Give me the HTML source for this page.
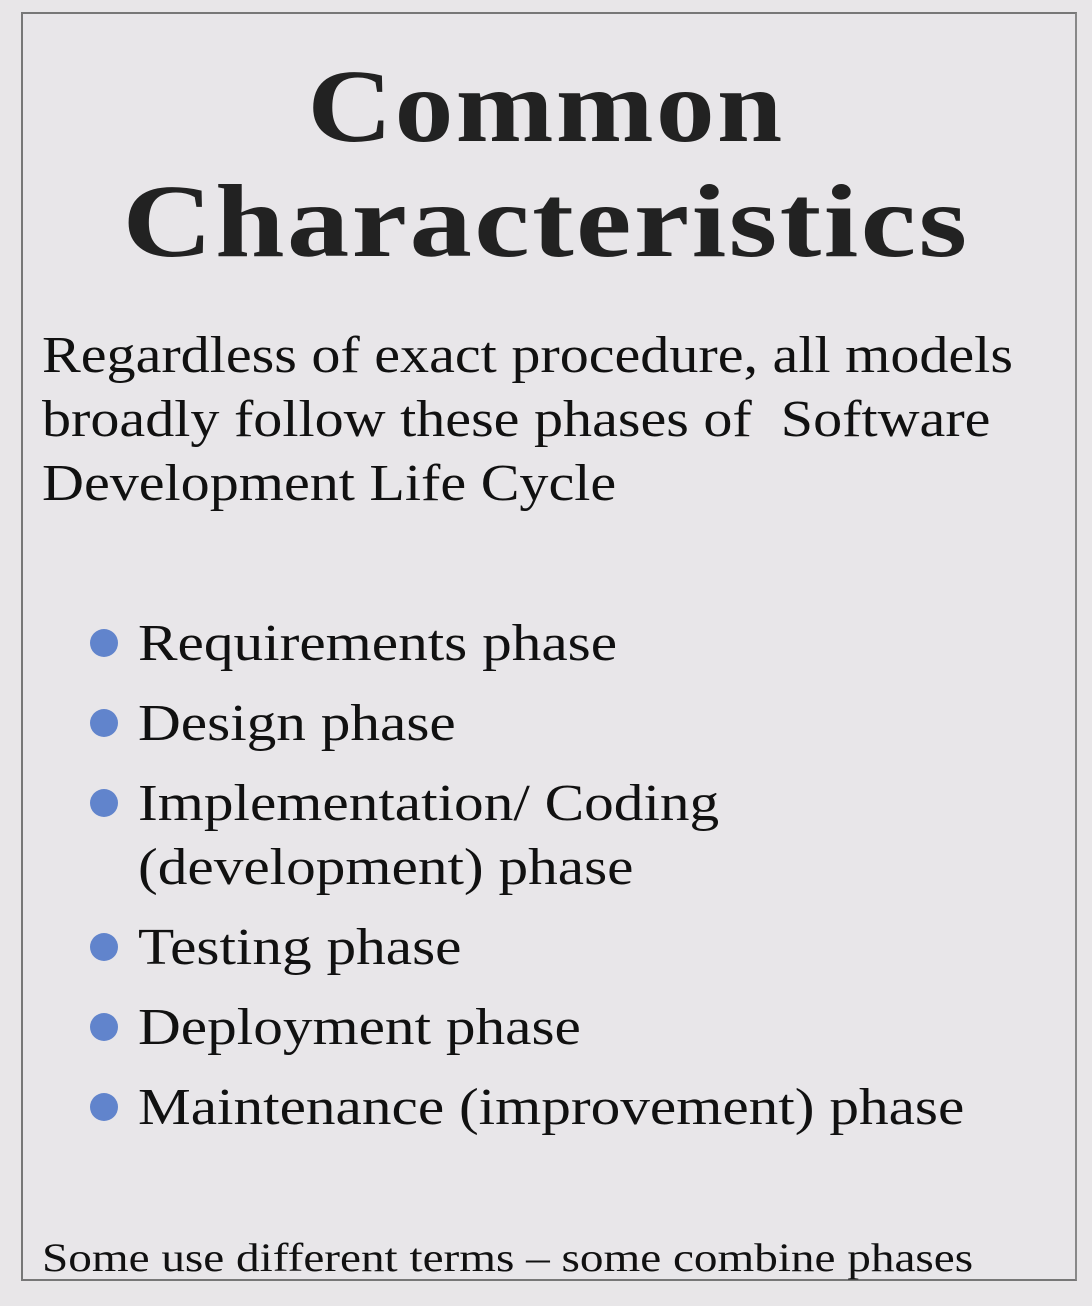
<!DOCTYPE html>
<html><head><meta charset="utf-8"><style>
html,body{margin:0;padding:0;background:#e8e6e8;width:1092px;height:1306px;overflow:hidden}
.box{position:absolute;left:21px;top:12px;width:1052px;height:1265px;border:2px solid #777;border-right-color:#888;background:#e8e6e9}
.t{position:absolute;font-family:"Liberation Serif",serif;color:#111;white-space:nowrap;line-height:1;transform-origin:0 0}
.h{font-weight:bold;font-size:104px;color:#222;left:0;width:1092px;text-align:center;letter-spacing:2px;transform-origin:50% 0}
.b{font-size:52px;transform:scaleX(1.117)}
.l{font-size:52px;transform:scaleX(1.14)}
.dot{position:absolute;left:90px;width:28px;height:28px;border-radius:50%;background:#6184cc}
</style></head><body>
<div class="box"></div>
<div class="t h" style="top:55px;transform:scaleX(1.13)">Common</div>
<div class="t h" style="top:170px;transform:scaleX(1.2)">Characteristics</div>
<div class="t b" style="left:42px;top:330px">Regardless of exact procedure, all models</div>
<div class="t b" style="left:42px;top:394px">broadly follow these phases of&nbsp; Software</div>
<div class="t b" style="left:42px;top:458px">Development Life Cycle</div>
<div class="dot" style="top:629px"></div><div class="t l" style="left:138px;top:618px">Requirements phase</div>
<div class="dot" style="top:709px"></div><div class="t l" style="left:138px;top:698px">Design phase</div>
<div class="dot" style="top:789px"></div><div class="t l" style="left:138px;top:778px">Implementation/ Coding</div>
<div class="t l" style="left:138px;top:842px">(development) phase</div>
<div class="dot" style="top:933px"></div><div class="t l" style="left:138px;top:922px">Testing phase</div>
<div class="dot" style="top:1013px"></div><div class="t l" style="left:138px;top:1002px">Deployment phase</div>
<div class="dot" style="top:1093px"></div><div class="t l" style="left:138px;top:1082px">Maintenance (improvement) phase</div>
<div class="t" style="left:42px;top:1238px;font-size:40px;transform:scaleX(1.18)">Some use different terms – some combine phases</div>
</body></html>
